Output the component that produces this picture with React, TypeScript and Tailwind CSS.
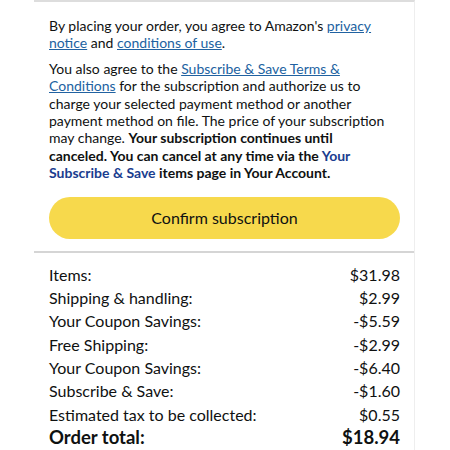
import React from 'react';

const rows: [string, string][] = [
  ['Items:', '$31.98'],
  ['Shipping & handling:', '$2.99'],
  ['Your Coupon Savings:', '-$5.59'],
  ['Free Shipping:', '-$2.99'],
  ['Your Coupon Savings:', '-$6.40'],
  ['Subscribe & Save:', '-$1.60'],
  ['Estimated tax to be collected:', '$0.55'],
];

export default function App() {
  return (
    <div className="h-[450px] w-[450px] overflow-hidden bg-white font-['Lato',sans-serif] text-[#0f1111]">
      <div className="ml-[34px] w-[381px] border-t-2 border-r border-t-[#dddddd] border-r-[#eeeeee]">
        <div className="pl-[15px] pr-[14px] pt-[15px] text-[14px] leading-[17.4px]">
          <div className="w-[340px]">
            <p>
              By placing your order, you agree to Amazon's{' '}
              <a className="text-[#2162a1] underline">privacy notice</a> and{' '}
              <a className="text-[#2162a1] underline">conditions of use</a>.
            </p>
            <p className="mt-[8px]">
              You also agree to the{' '}
              <a className="text-[#2162a1] underline">Subscribe &amp; Save Terms &amp; Conditions</a> for the
              subscription and authorize us to charge your selected payment method or another payment method
              on file. The price of your subscription may change.{' '}
              <b>
                Your subscription continues until canceled. You can cancel at any time via the{' '}
                <a className="text-[#1a3d8f]">Your Subscribe &amp; Save</a> items page in Your Account.
              </b>
            </p>
          </div>
          <button className="mt-[15px] h-[42px] w-full rounded-full bg-[#f7d94c] text-[16px] text-[#0f1111]">
            Confirm subscription
          </button>
        </div>
        <div className="mt-[12px] h-[2px] bg-[#d5d5d5]" />
        <div className="pl-[15px] pr-[14px] pt-[10.5px] text-[16px]">
          {rows.map(([label, value], i) => (
            <div key={i} className="flex h-[23.3px] items-center justify-between">
              <span>{label}</span>
              <span>{value}</span>
            </div>
          ))}
          <div className="flex h-[23.3px] items-center justify-between text-[18.5px] font-bold">
            <span>Order total:</span>
            <span>$18.94</span>
          </div>
        </div>
      </div>
    </div>
  );
}
